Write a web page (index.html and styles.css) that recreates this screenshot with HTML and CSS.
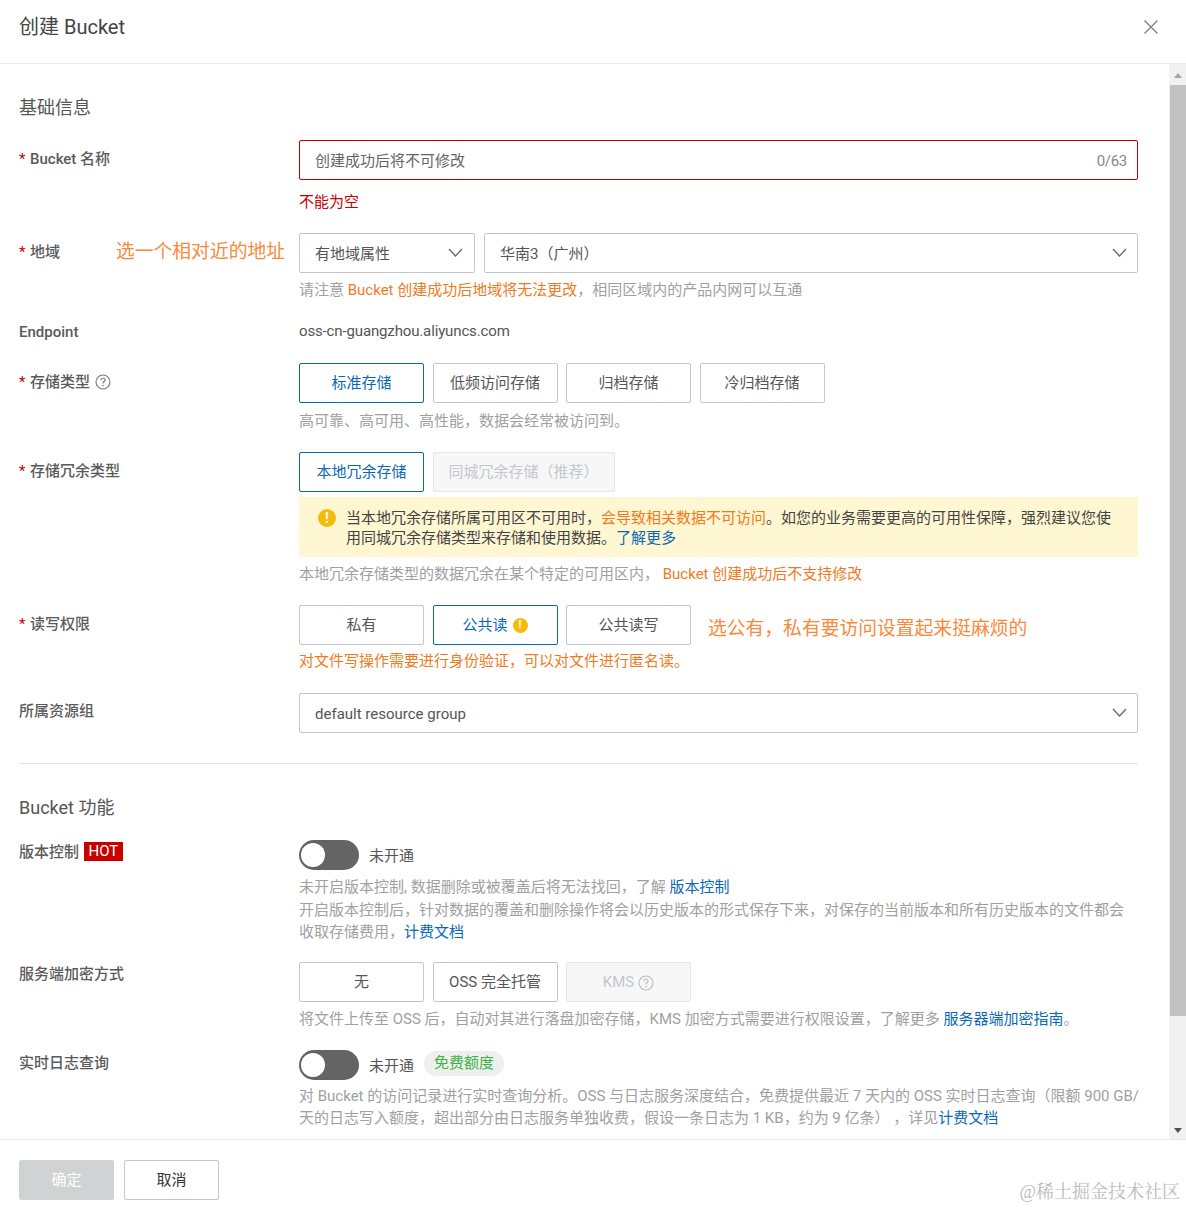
FILE: index.html
```html
<!DOCTYPE html>
<html lang="zh-CN">
<head>
<meta charset="utf-8">
<title>创建 Bucket</title>
<link rel="stylesheet" href="styles.css">
</head>
<body>
<div class="dialog">
  <header class="head">
    <h1>创建 Bucket</h1>
    <svg class="close" viewBox="0 0 14 14"><path d="M0.5 0.5L13.5 13.5M13.5 0.5L0.5 13.5"/></svg>
  </header>
  <div class="scroller">
    <main class="content">
      <h2 class="sec first">基础信息</h2>

      <div class="row r-name">
        <div class="label"><i>*</i>Bucket 名称</div>
        <div class="field">
          <div class="box error"><span class="ph">创建成功后将不可修改</span><span class="count">0/63</span></div>
          <div class="errmsg">不能为空</div>
        </div>
      </div>

      <div class="row r-region">
        <div class="label"><i>*</i>地域<span class="note">选一个相对近的地址</span></div>
        <div class="field">
          <div class="selects">
            <div class="box sel s1"><span>有地域属性</span><svg class="chev" viewBox="0 0 15 9"><path d="M1 1L7.5 8L14 1"/></svg></div>
            <div class="box sel s2"><span>华南3（广州）</span><svg class="chev" viewBox="0 0 15 9"><path d="M1 1L7.5 8L14 1"/></svg></div>
          </div>
          <div class="help h1">请注意 <b>Bucket 创建成功后地域将无法更改</b>，相同区域内的产品内网可以互通</div>
        </div>
      </div>

      <div class="row r-end">
        <div class="label plain">Endpoint</div>
        <div class="field endpoint">oss-cn-guangzhou.aliyuncs.com</div>
      </div>

      <div class="row r-type">
        <div class="label"><i>*</i>存储类型<svg class="q" viewBox="0 0 16 16"><circle cx="8" cy="8" r="7"/><path d="M5.9 6.2C5.9 5 6.8 4.2 8 4.2C9.2 4.2 10.1 5 10.1 6.1C10.1 7.5 8 7.6 8 9.4"/><circle class="dot" cx="8" cy="11.6" r=".8"/></svg></div>
        <div class="field">
          <div class="btns">
            <div class="opt on">标准存储</div><div class="opt">低频访问存储</div><div class="opt">归档存储</div><div class="opt">冷归档存储</div>
          </div>
          <div class="help h2">高可靠、高可用、高性能，数据会经常被访问到。</div>
        </div>
      </div>

      <div class="row r-red">
        <div class="label"><i>*</i>存储冗余类型</div>
        <div class="field">
          <div class="btns">
            <div class="opt on">本地冗余存储</div><div class="opt off wide">同城冗余存储（推荐）</div>
          </div>
          <div class="alert">
            <span class="warn big">!</span>
            <p>当本地冗余存储所属可用区不可用时，<b>会导致相关数据不可访问</b>。如您的业务需要更高的可用性保障，强烈建议您使用同城冗余存储类型来存储和使用数据。<a>了解更多</a></p>
          </div>
          <div class="help h3">本地冗余存储类型的数据冗余在某个特定的可用区内， <b>Bucket 创建成功后不支持修改</b></div>
        </div>
      </div>

      <div class="row r-acl">
        <div class="label"><i>*</i>读写权限</div>
        <div class="field">
          <div class="btns">
            <div class="opt">私有</div><div class="opt on">公共读<span class="warn small">!</span></div><div class="opt">公共读写</div><span class="note side">选公有，私有要访问设置起来挺麻烦的</span>
          </div>
          <div class="help h4"><b>对文件写操作需要进行身份验证，可以对文件进行匿名读。</b></div>
        </div>
      </div>

      <div class="row r-group">
        <div class="label">所属资源组</div>
        <div class="field">
          <div class="box sel"><span>default resource group</span><svg class="chev" viewBox="0 0 15 9"><path d="M1 1L7.5 8L14 1"/></svg></div>
        </div>
      </div>

      <hr class="divider">
      <h2 class="sec">Bucket 功能</h2>

      <div class="row r-ver">
        <div class="label">版本控制<span class="hot">HOT</span></div>
        <div class="field">
          <div class="toggle-line"><span class="toggle"></span><span class="state">未开通</span></div>
          <div class="help h5">未开启版本控制, 数据删除或被覆盖后将无法找回，了解 <a>版本控制</a><br>开启版本控制后，针对数据的覆盖和删除操作将会以历史版本的形式保存下来，对保存的当前版本和所有历史版本的文件都会收取存储费用，<a>计费文档</a></div>
        </div>
      </div>

      <div class="row r-enc">
        <div class="label">服务端加密方式</div>
        <div class="field">
          <div class="btns">
            <div class="opt">无</div><div class="opt">OSS 完全托管</div><div class="opt off">KMS<svg class="q" viewBox="0 0 16 16"><circle cx="8" cy="8" r="7"/><path d="M5.9 6.2C5.9 5 6.8 4.2 8 4.2C9.2 4.2 10.1 5 10.1 6.1C10.1 7.5 8 7.6 8 9.4"/><circle class="dot" cx="8" cy="11.6" r=".8"/></svg></div>
          </div>
          <div class="help h6">将文件上传至 OSS 后，自动对其进行落盘加密存储，KMS 加密方式需要进行权限设置，了解更多 <a>服务器端加密指南</a>。</div>
        </div>
      </div>

      <div class="row r-log">
        <div class="label">实时日志查询</div>
        <div class="field">
          <div class="toggle-line"><span class="toggle"></span><span class="state">未开通</span><span class="free">免费额度</span></div>
          <div class="help h5">对 Bucket 的访问记录进行实时查询分析。OSS 与日志服务深度结合，免费提供最近 7 天内的 OSS 实时日志查询（限额 900 GB/<wbr>天的日志写入额度，超出部分由日志服务单独收费，假设一条日志为 1 KB，约为 9 亿条）&nbsp;，详见<a>计费文档</a></div>
        </div>
      </div>
    </main>
    <div class="scrollbar">
      <span class="arrow up"></span>
      <span class="thumb"></span>
      <span class="arrow down"></span>
    </div>
  </div>
  <footer class="foot">
    <button class="btn primary">确定</button>
    <button class="btn">取消</button>
  </footer>
</div>
<div class="watermark">@稀土掘金技术社区</div>
</body>
</html>
```

FILE: styles.css
```css
* { box-sizing: border-box; }
html, body { margin: 0; padding: 0; height: 100%; }
body {
  position: relative;
  overflow: hidden;
  background: #fff;
  color: #555;
  font: 15px/20px Roboto, "Noto Sans CJK SC", sans-serif;
}
.dialog { height: 1208px; display: flex; flex-direction: column; }
.head {
  height: 64px;
  flex: none;
  padding: 0 28px 10px 19px;
  display: flex;
  align-items: center;
  justify-content: space-between;
  border-bottom: 1px solid #e8e8e8;
}
.head h1 { margin: 0; font-size: 20px; line-height: 28px; font-weight: 400; color: #444; }
.close { width: 14px; height: 14px; fill: none; stroke: #808080; stroke-width: 1.4; }

.scroller { flex: 1; min-height: 0; display: flex; overflow: hidden; }
.content { flex: 1; min-width: 0; padding: 0 31px 0 19px; overflow: hidden; }
.scrollbar { flex: none; width: 17px; background: #f1f1f1; display: flex; flex-direction: column; align-items: center; }
.thumb { width: 16px; height: 931px; background: #c1c1c1; margin-left: 1px; }
.arrow { width: 0; height: 0; border-left: 4.5px solid transparent; border-right: 4.5px solid transparent; }
.arrow.up { border-bottom: 5px solid #a3a3a3; margin: 9px 0 7px; }
.arrow.down { border-top: 5px solid #505050; margin-top: auto; margin-bottom: 6px; }

.sec { margin: 0; font-size: 18px; line-height: 26px; font-weight: 400; color: #555; }
.sec.first { margin-top: 31px; margin-bottom: 19px; }
.divider { margin: 30px 0 31px; border: 0; border-top: 1px solid #e5e5e5; }
.divider + .sec { margin-bottom: 19px; margin-top: 0; }

.row { display: flex; }
.label { flex: none; width: 280px; padding-top: 9px; font-weight: 500; color: #5a5a5a; white-space: nowrap; display: flex; align-items: flex-start; position: relative; }
.label i { font-style: normal; color: #c80000; width: 11px; font-weight: 400; }
.label.plain { padding-top: 1px; }
.r-group .label { padding-top: 8px; }
.r-enc .label { padding-top: 2px; }
.field { flex: 1; min-width: 0; }

.box { height: 40px; border: 1px solid #c4c6cf; border-radius: 2px; display: flex; align-items: center; justify-content: space-between; padding: 2px 10px 0 15px; color: #555; background: #fff; }
.box.error { border-color: #c80000; }
.ph { color: #666; }
.count { color: #888; letter-spacing: -0.3px; }
.errmsg { color: #c80000; margin-top: 12px; }
.selects { display: flex; gap: 9px; }
.s1 { width: 176px; flex: none; padding-right: 11px; }
.s2 { flex: 1; }
.chev { width: 15px; height: 9px; fill: none; stroke: #666; stroke-width: 1.3; margin-bottom: 4px; }

.note { color: #f98a3c; font-size: 18.8px; line-height: 26px; font-weight: 400; }
.label .note { position: absolute; left: 97px; top: 6px; }
.note.side { margin-left: 8.5px; padding-top: 11px; }

.help { color: #a0a0a0; }
.help b { color: #f07a1d; font-weight: 400; }
a { color: #0a68b8; }
.h1 { margin-top: 7px; }
.h2 { margin-top: 8px; }
.h3 { margin-top: 7px; }
.h4 { margin-top: 6px; }
.h5 { margin-top: 5px; line-height: 22.5px; }
.r-ver .h5 { margin-top: 6px; }
.r-log .h5 { margin-right: -3px; }
.h6 { margin-top: 7px; }

.r-name { margin-bottom: 21px; }
.r-region { margin-bottom: 21px; }
.r-end { margin-bottom: 21px; }
.endpoint { color: #555; letter-spacing: -0.14px; }
.r-type { margin-bottom: 21px; }
.r-red { margin-bottom: 21px; }
.r-acl { margin-bottom: 22px; }
.r-ver { margin-bottom: 18px; }
.r-enc { margin-bottom: 21px; }

.btns { display: flex; gap: 8.5px; align-items: flex-start; }
.opt { width: 125px; height: 40px; flex: none; border: 1px solid #c4c6cf; border-radius: 2px; display: flex; align-items: center; justify-content: center; color: #555; background: #fff; }
.opt.on { border-color: #0a68b8; color: #0a68b8; }
.opt.off { background: #f7f7f7; border-color: #e6e7eb; color: #c4c6cf; }
.opt.wide { width: 182px; }
.q { width: 16px; height: 16px; fill: none; stroke: #777; stroke-width: 1.1; margin-left: 5px; margin-top: 2px; flex: none; }
.q .dot { fill: #777; stroke: none; }
.opt.off .q { stroke: #bbb; margin-left: 4px; }
.opt.off .q .dot { fill: #bbb; }

.alert { margin-top: 5px; height: 60px; background: #fff6d2; padding: 11px 24px 0 19px; display: flex; gap: 10px; color: #444; }
.alert p { margin: 0; }
.alert b { font-weight: 400; color: #f07a1d; }
.warn { flex: none; border-radius: 50%; background: #f5bb0b; color: #fff; display: inline-flex; align-items: center; justify-content: center; font-weight: 700; }
.warn.big { width: 18px; height: 18px; margin-top: 1px; font-size: 14px; }
.warn.small { width: 15px; height: 15px; margin-left: 5px; font-size: 11px; }

.toggle-line { display: flex; align-items: center; height: 30px; }
.toggle { width: 60px; height: 30px; border-radius: 15px; background: #646464; position: relative; flex: none; }
.toggle::before { content: ""; position: absolute; left: 2px; top: 3px; width: 24px; height: 24px; border-radius: 50%; background: #fff; }
.state { margin-left: 10px; margin-top: 2px; color: #555; }
.free { margin-left: 10px; margin-top: -2px; height: 25px; line-height: 25px; padding: 0 10px; border-radius: 13px; background: #edf1ec; color: #3fb04a; }
.hot { background: #c80000; color: #fff; font-weight: 400; height: 19px; line-height: 19px; padding: 0 4.5px; margin-left: 5px; }
.r-ver .label { padding-top: 2px; }
.r-log .label { padding-top: 3px; }

.foot { flex: none; height: 69px; border-top: 1px solid #e8e8e8; padding: 20px 19px 0; display: flex; gap: 10px; align-items: flex-start; }
.btn { width: 95px; height: 40px; border: 1px solid #c4c6cf; border-radius: 2px; background: #fff; color: #333; font: inherit; padding: 0; }
.btn.primary { background: #d0d2d4; border-color: #d0d2d4; color: #fff; }

.watermark { position: absolute; right: 6px; top: 1181px; font-size: 18px; line-height: 22px; color: #bbb; font-family: "Liberation Serif", "Noto Serif CJK SC", "Noto Sans CJK SC", serif; }
```
